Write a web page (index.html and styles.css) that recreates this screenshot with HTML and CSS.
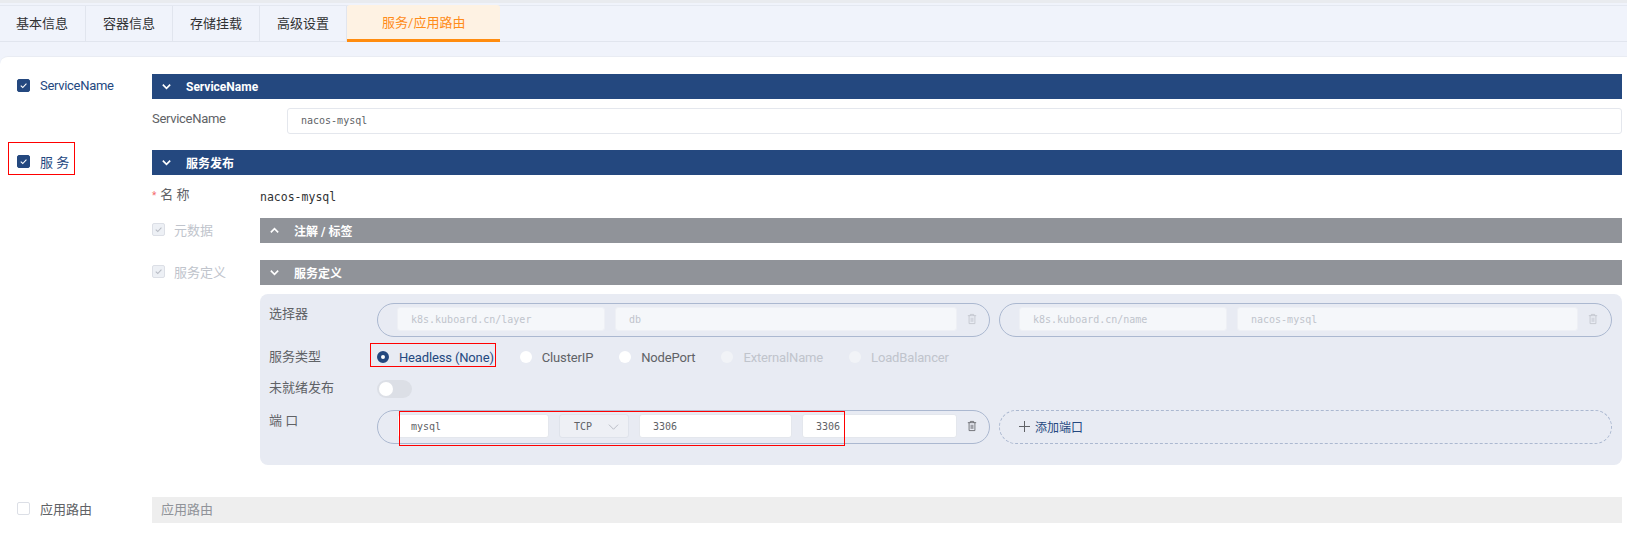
FILE: index.html
```html
<!DOCTYPE html>
<html lang="en">

<head>
    <meta charset="UTF-8">
    <title>服务/应用路由</title>
    <link rel="stylesheet" href="styles.css">
</head>

<body>
    <nav class="tabs">
        <a class="tab tab-first">基本信息</a>
        <a class="tab">容器信息</a>
        <a class="tab">存储挂载</a>
        <a class="tab">高级设置</a>
        <a class="tab tab-active">服务/应用路由</a>
    </nav>

    <main class="card">
        <!-- ServiceName -->
        <section class="block block-name">
            <div class="side">
                <label class="check"><i class="box box-on"><svg viewBox="0 0 12 12"><path d="M3 6.2 5.2 8.2 9.2 4"/></svg></i><span class="latin">ServiceName</span></label>
            </div>
            <div class="content">
                <div class="bar bar-navy"><svg class="chev" viewBox="0 0 12 12"><path d="M2 4 6 8 10 4"/></svg>ServiceName</div>
                <div class="name-row">
                    <span class="name-label latin">ServiceName</span>
                    <div class="input input-name">nacos-mysql</div>
                </div>
            </div>
        </section>

        <!-- 服务 -->
        <section class="block block-service">
            <div class="side">
                <label class="check"><i class="box box-on"><svg viewBox="0 0 12 12"><path d="M3 6.2 5.2 8.2 9.2 4"/></svg></i>服 务<span class="mark mark-service"></span></label>
            </div>
            <div class="content">
                <div class="bar bar-navy"><svg class="chev" viewBox="0 0 12 12"><path d="M2 4 6 8 10 4"/></svg>服务发布</div>

                <div class="field field-title">
                    <span class="field-label"><em>*</em>名 称</span>
                    <span class="title-value">nacos-mysql</span>
                </div>

                <div class="field field-meta">
                    <label class="check check-off"><i class="box box-dis"><svg viewBox="0 0 12 12"><path d="M3 6.2 5.2 8.2 9.2 4"/></svg></i>元数据</label>
                    <div class="def">
                        <div class="bar bar-gray"><svg class="chev" viewBox="0 0 12 12"><path d="M2 8 6 4 10 8"/></svg>注解 / 标签</div>
                    </div>
                </div>

                <div class="field">
                    <label class="check check-off"><i class="box box-dis"><svg viewBox="0 0 12 12"><path d="M3 6.2 5.2 8.2 9.2 4"/></svg></i>服务定义</label>
                    <div class="def">
                        <div class="bar bar-gray"><svg class="chev" viewBox="0 0 12 12"><path d="M2 4 6 8 10 4"/></svg>服务定义</div>

                        <div class="panel">
                            <div class="row">
                                <span class="row-label">选择器</span>
                                <div class="pair">
                                    <div class="pill">
                                        <div class="input input-dis w-key">k8s.kuboard.cn/layer</div>
                                        <div class="input input-dis w-val">db</div>
                                        <svg class="trash trash-dis" viewBox="0 0 12 14"><path d="M1 3h10M4 3V1.5h4V3M2.5 3v9.5h7V3M5 5.5v5M7 5.5v5"/></svg>
                                    </div>
                                    <div class="pill">
                                        <div class="input input-dis w-key">k8s.kuboard.cn/name</div>
                                        <div class="input input-dis w-val2">nacos-mysql</div>
                                        <svg class="trash trash-dis" viewBox="0 0 12 14"><path d="M1 3h10M4 3V1.5h4V3M2.5 3v9.5h7V3M5 5.5v5M7 5.5v5"/></svg>
                                    </div>
                                </div>
                            </div>

                            <div class="row row-type">
                                <span class="row-label">服务类型</span>
                                <div class="radios">
                                    <span class="radio radio-on">Headless (None)<span class="mark mark-radio"></span></span>
                                    <span class="radio">ClusterIP</span>
                                    <span class="radio">NodePort</span>
                                    <span class="radio radio-dis">ExternalName</span>
                                    <span class="radio radio-dis">LoadBalancer</span>
                                </div>
                            </div>

                            <div class="row row-switch">
                                <span class="row-label row-label-up">未就绪发布</span>
                                <span class="switch"></span>
                            </div>

                            <div class="row row-port">
                                <span class="row-label">端 口</span>
                                <div class="pair">
                                    <div class="pill">
                                        <span class="mark mark-port"></span>
                                        <div class="input w-port">mysql</div>
                                        <div class="select">TCP<svg viewBox="0 0 12 12"><path d="M1 4 6 9 11 4"/></svg></div>
                                        <div class="input w-num">3306</div>
                                        <div class="input w-target">3306</div>
                                        <svg class="trash" viewBox="0 0 12 14"><path d="M1 3h10M4 3V1.5h4V3M2.5 3v9.5h7V3M5 5.5v5M7 5.5v5"/></svg>
                                    </div>
                                    <div class="pill pill-add"><svg class="plus" viewBox="0 0 11 11"><path d="M5.5 0v11M0 5.5h11"/></svg>添加端口</div>
                                </div>
                            </div>
                        </div>
                    </div>
                </div>
            </div>
        </section>

        <!-- 应用路由 -->
        <section class="block block-route">
            <div class="side">
                <label class="check check-route"><i class="box"></i>应用路由</label>
            </div>
            <div class="content">
                <div class="bar bar-off">应用路由</div>
            </div>
        </section>
    </main>
</body>

</html>
```

FILE: styles.css
```css
body {
    margin: 0;
    height: 533px;
    overflow: hidden;
    background-color: #f0f3fb;
    font-family: Roboto, "Noto Sans CJK SC", sans-serif;
    font-size: 13px;
    color: #606266;
    border-top: 3px solid #e9ebef;
    box-sizing: border-box;
}

.latin {
    letter-spacing: -0.3px;
}

/* tabs */
.tabs {
    display: flex;
    height: 37px;
    margin-top: 2px;
    border-top: 1px solid #e4e8f1;
    border-bottom: 1px solid #e1e5ee;
    box-sizing: border-box;
}

.tab {
    padding: 0 17px;
    line-height: 35px;
    color: #303133;
    border-right: 1px solid #e1e5ee;
}

.tab-first {
    padding-left: 16px;
}

.tab-active {
    padding: 0 35px;
    height: 37px;
    margin-top: -1px;
    line-height: 36px;
    background-color: #fef2e3;
    color: #ff8c1a;
    border-right: none;
    border-bottom: 3px solid #ff8c0f;
    border-radius: 3px 3px 0 0;
    box-sizing: border-box;
}

/* card */
.card {
    margin-top: 14px;
    height: 480px;
    background-color: #fff;
    border-top: 1px solid #e9ecf3;
    border-radius: 8px 0 0 0;
    padding: 17px 5px 0 0;
    box-sizing: border-box;
}

.block {
    display: flex;
}

.side {
    width: 152px;
    flex: none;
}

.content {
    flex: 1;
    min-width: 0;
}

.check {
    display: flex;
    align-items: center;
    gap: 10px;
    position: relative;
}

.side .check {
    color: #24487f;
    margin: 2px 0 0 17px;
    height: 18px;
}

.side .check-route {
    color: #606266;
}

.check-off {
    color: #c0c4cc;
    width: 108px;
    flex: none;
    height: 25px;
    gap: 9px;
    margin-top: -1px;
}

.box {
    width: 13px;
    height: 13px;
    flex: none;
    border: 1px solid #dcdfe6;
    border-radius: 2px;
    background-color: #fff;
    display: block;
    box-sizing: border-box;
}

.box svg {
    display: block;
    width: 11px;
    height: 11px;
    fill: none;
    stroke: #fff;
    stroke-width: 1.2;
}

.box-on {
    background-color: #24487f;
    border-color: #24487f;
}

.box-dis {
    background-color: #edf0f5;
}

.box-dis svg {
    stroke: #b8bcc4;
}

.bar {
    height: 25px;
    font-size: 12px;
    font-weight: bold;
    color: #fff;
    display: flex;
    align-items: center;
}

.chev {
    width: 11px;
    height: 11px;
    margin: 0 14px 0 9px;
    fill: none;
    stroke: #fff;
    stroke-width: 1.8;
}

.bar-navy {
    background-color: #24487f;
}

.bar-gray {
    background-color: #909399;
}

.bar-off {
    background-color: #eee;
    color: #909399;
    font-size: 13px;
    font-weight: normal;
    padding: 0 0 3px 9px;
    height: 26px;
    box-sizing: border-box;
}

.name-row {
    display: flex;
    align-items: center;
    margin-top: 9px;
}

.name-label {
    width: 135px;
    flex: none;
    margin-top: -5px;
}

.input {
    height: 24px;
    line-height: 23px;
    flex: none;
    background-color: #fff;
    border: 1px solid #e4e7ed;
    border-radius: 3px;
    padding-left: 13px;
    font-family: "DejaVu Sans Mono", monospace;
    font-size: 10px;
    color: #606266;
    box-sizing: border-box;
}

.input-name {
    flex: 1;
    height: 26px;
    line-height: 24px;
}

.block-service {
    margin-top: 16px;
}

.field {
    display: flex;
}

.field-title {
    height: 43px;
    padding-top: 11px;
    box-sizing: border-box;
}

.field-label {
    width: 108px;
    flex: none;
    line-height: 18px;
}

.field-label em {
    color: #f56c6c;
    font-style: normal;
    font-size: 10px;
    margin-right: 4px;
}

.title-value {
    font-family: "DejaVu Sans Mono", monospace;
    font-size: 11.5px;
    color: #303133;
    line-height: 22px;
}

.field-meta {
    height: 42px;
}

.def {
    flex: 1;
    min-width: 0;
}

.panel {
    background-color: #e8ebf3;
    border-radius: 8px;
    margin-top: 9px;
    height: 171px;
    padding-top: 9px;
    box-sizing: border-box;
}

.row {
    display: flex;
}

.row-label {
    width: 117px;
    flex: none;
    padding: 2px 0 0 9px;
    box-sizing: border-box;
    line-height: 18px;
}

.row-label-up {
    padding-top: 0;
    margin-top: -1px;
}

.pair {
    display: flex;
    gap: 9px;
}

.pill {
    position: relative;
    width: 613px;
    height: 34px;
    display: flex;
    align-items: center;
    gap: 10px;
    padding: 0 0 2px 19px;
    border: 1px solid #abb8d0;
    border-radius: 17px;
    box-sizing: border-box;
}

.w-key { width: 208px; }
.w-val { width: 342px; }
.w-val2 { width: 341px; }
.w-port { width: 152px; }
.w-num { width: 153px; }
.w-target { width: 155px; }

.input-dis {
    background-color: #f5f7fa;
    border-color: #eef0f5;
    color: #c0c4cc;
}

.select {
    width: 70px;
    height: 24px;
    flex: none;
    display: flex;
    align-items: center;
    justify-content: space-between;
    padding: 0 9px 0 14px;
    background-color: #eef0f5;
    border: 1px solid #dfe3eb;
    border-radius: 3px;
    font-family: "DejaVu Sans Mono", monospace;
    font-size: 10px;
    box-sizing: border-box;
}

.select svg {
    width: 11px;
    height: 11px;
    fill: none;
    stroke: #b5b9c2;
}

.trash {
    width: 10px;
    height: 12px;
    flex: none;
    fill: none;
    stroke: #606266;
}

.trash-dis {
    stroke: #c0c4cc;
}

.row-type {
    margin-top: 10px;
    height: 20px;
    align-items: center;
}

.row-type .row-label {
    padding-top: 0;
}

.radios {
    display: flex;
    height: 20px;
    gap: 26px;
    letter-spacing: -0.15px;
}

.radio {
    position: relative;
    display: flex;
    align-items: center;
    gap: 10px;
}

.radio::before {
    content: "";
    width: 12px;
    height: 12px;
    border-radius: 50%;
    background-color: #fff;
    flex: none;
    box-sizing: border-box;
}

.radio-on {
    color: #24487f;
}

.radio-on::before {
    border: 4px solid #24487f;
}

.radio-dis {
    color: #c0c4cc;
}

.radio-dis::before {
    background-color: #f1f3f7;
}

.switch {
    display: block;
    width: 35px;
    height: 18px;
    border-radius: 9px;
    background-color: #dcdfe6;
    position: relative;
}

.switch::after {
    content: "";
    position: absolute;
    left: 2px;
    top: 2px;
    width: 14px;
    height: 14px;
    border-radius: 50%;
    background-color: #fff;
}

.row-switch {
    margin-top: 13px;
    height: 18px;
}

.row-port {
    margin-top: 12px;
}

.pill-add {
    border-style: dashed;
    color: #24487f;
    font-size: 12px;
    gap: 5px;
}

.plus {
    width: 11px;
    height: 11px;
    fill: none;
    stroke: #606266;
}

.block-route {
    margin-top: 32px;
}

/* red markers over the screenshot */
.mark {
    position: absolute;
    border: 1px solid #f00;
    box-sizing: border-box;
    pointer-events: none;
}

.mark-service {
    left: -9px;
    top: -10px;
    width: 67px;
    height: 33px;
}

.mark-radio {
    left: -7px;
    top: -4px;
    width: 126px;
    height: 24px;
}

.mark-port {
    left: 21px;
    top: 0;
    width: 446px;
    height: 35px;
}
```
